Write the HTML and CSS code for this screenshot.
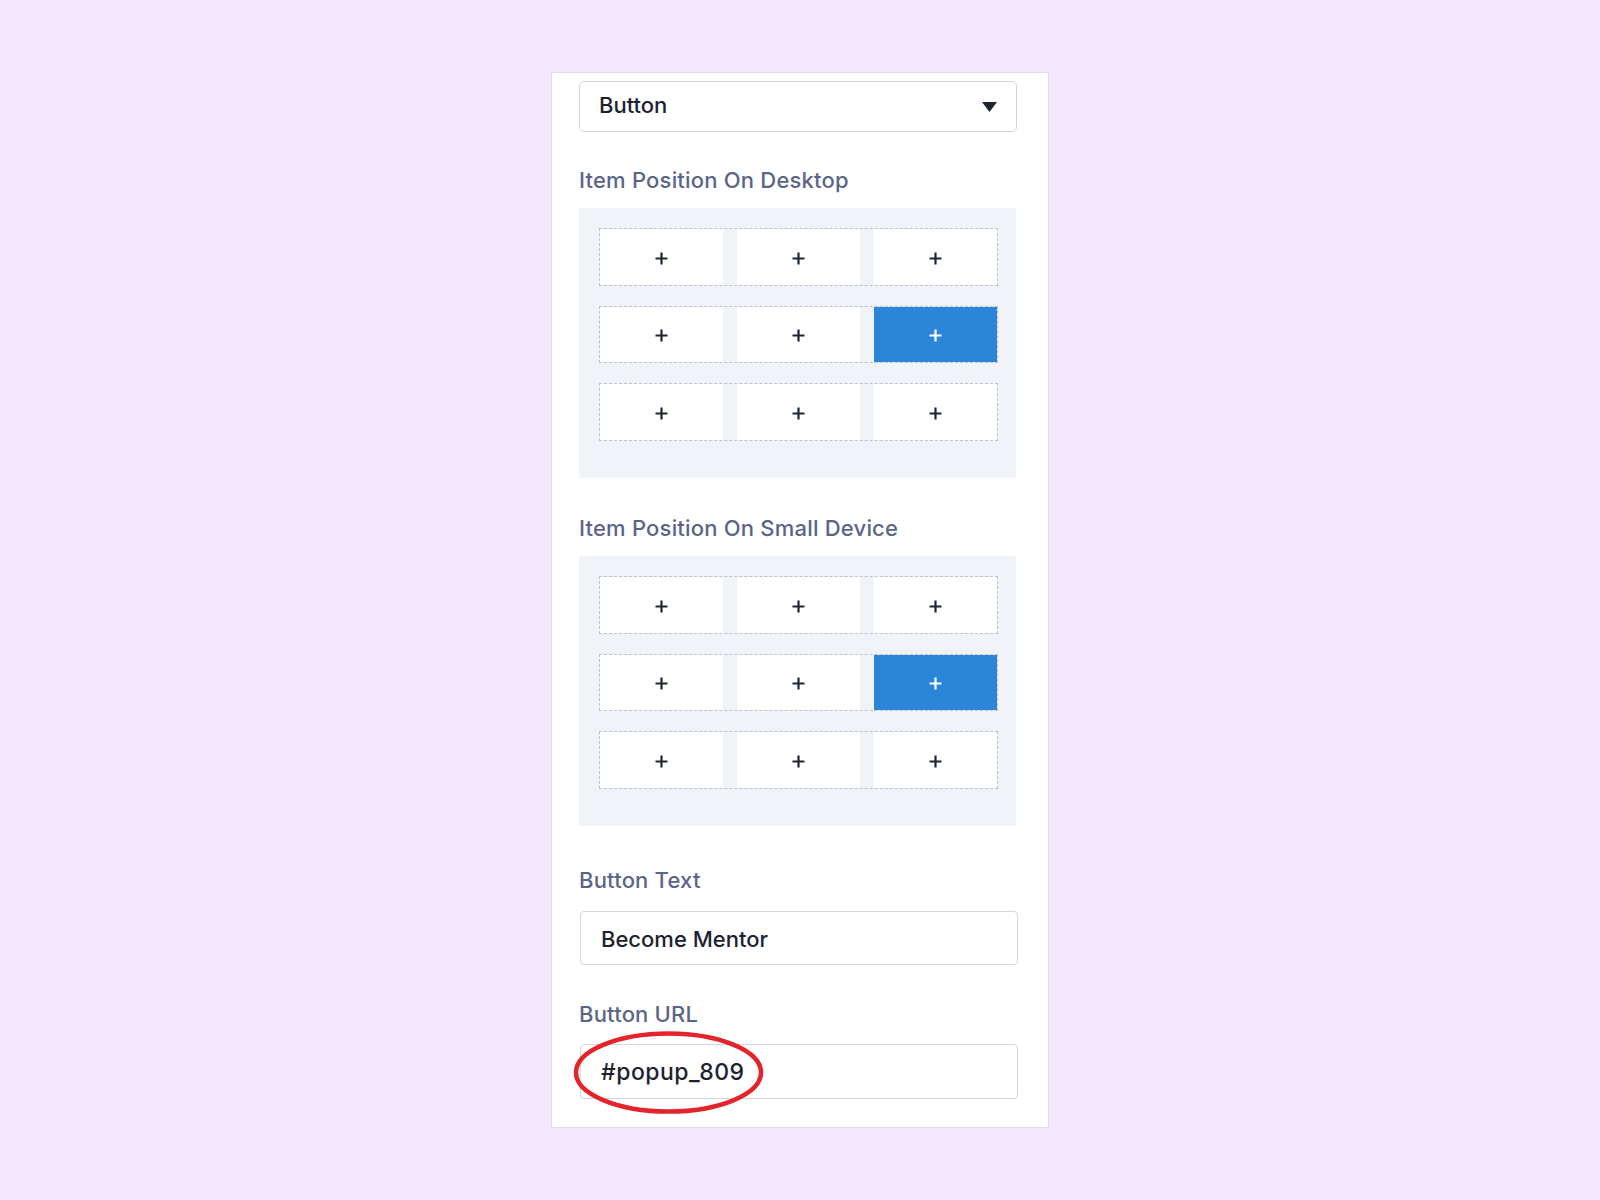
FILE: index.html
```html
<!DOCTYPE html>
<html lang="en">
<head>
<meta charset="utf-8">
<title>Item settings</title>
<link rel="stylesheet" href="styles.css">
</head>
<body>
<div class="stage">
  <div class="panel">
    <div class="select">
      <span class="select-value">Button</span>
      <svg class="caret" width="15" height="10" viewBox="0 0 15 10"><path d="M0 0 H15 L7.5 10 Z" fill="#1f2533"/></svg>
    </div>

    <div class="label label-first">Item Position On Desktop</div>
    <div class="grid-box">
      <div class="row"><div class="cell"><svg class="plus" viewBox="0 0 13 13"><path d="M6.5 0.5V12.5M0.5 6.5H12.5"/></svg></div><div class="cell"><svg class="plus" viewBox="0 0 13 13"><path d="M6.5 0.5V12.5M0.5 6.5H12.5"/></svg></div><div class="cell"><svg class="plus" viewBox="0 0 13 13"><path d="M6.5 0.5V12.5M0.5 6.5H12.5"/></svg></div></div>
      <div class="row"><div class="cell"><svg class="plus" viewBox="0 0 13 13"><path d="M6.5 0.5V12.5M0.5 6.5H12.5"/></svg></div><div class="cell"><svg class="plus" viewBox="0 0 13 13"><path d="M6.5 0.5V12.5M0.5 6.5H12.5"/></svg></div><div class="cell active"><svg class="plus" viewBox="0 0 13 13"><path d="M6.5 0.5V12.5M0.5 6.5H12.5"/></svg></div></div>
      <div class="row"><div class="cell"><svg class="plus" viewBox="0 0 13 13"><path d="M6.5 0.5V12.5M0.5 6.5H12.5"/></svg></div><div class="cell"><svg class="plus" viewBox="0 0 13 13"><path d="M6.5 0.5V12.5M0.5 6.5H12.5"/></svg></div><div class="cell"><svg class="plus" viewBox="0 0 13 13"><path d="M6.5 0.5V12.5M0.5 6.5H12.5"/></svg></div></div>
    </div>

    <div class="label label-second">Item Position On Small Device</div>
    <div class="grid-box">
      <div class="row"><div class="cell"><svg class="plus" viewBox="0 0 13 13"><path d="M6.5 0.5V12.5M0.5 6.5H12.5"/></svg></div><div class="cell"><svg class="plus" viewBox="0 0 13 13"><path d="M6.5 0.5V12.5M0.5 6.5H12.5"/></svg></div><div class="cell"><svg class="plus" viewBox="0 0 13 13"><path d="M6.5 0.5V12.5M0.5 6.5H12.5"/></svg></div></div>
      <div class="row"><div class="cell"><svg class="plus" viewBox="0 0 13 13"><path d="M6.5 0.5V12.5M0.5 6.5H12.5"/></svg></div><div class="cell"><svg class="plus" viewBox="0 0 13 13"><path d="M6.5 0.5V12.5M0.5 6.5H12.5"/></svg></div><div class="cell active"><svg class="plus" viewBox="0 0 13 13"><path d="M6.5 0.5V12.5M0.5 6.5H12.5"/></svg></div></div>
      <div class="row"><div class="cell"><svg class="plus" viewBox="0 0 13 13"><path d="M6.5 0.5V12.5M0.5 6.5H12.5"/></svg></div><div class="cell"><svg class="plus" viewBox="0 0 13 13"><path d="M6.5 0.5V12.5M0.5 6.5H12.5"/></svg></div><div class="cell"><svg class="plus" viewBox="0 0 13 13"><path d="M6.5 0.5V12.5M0.5 6.5H12.5"/></svg></div></div>
    </div>

    <div class="label label-third">Button Text</div>
    <div class="input">Become Mentor</div>

    <div class="label label-fourth">Button URL</div>
    <div class="input input-url">#popup_809
      <svg class="annotation" width="197" height="89" viewBox="0 0 197 89"><ellipse cx="98.5" cy="44.5" rx="92.5" ry="39" fill="none" stroke="#e3242b" stroke-width="4.5"/></svg>
    </div>
  </div>
</div>
</body>
</html>
```

FILE: styles.css
```css
html, body {
  margin: 0;
  padding: 0;
}
body {
  background: #f2e9fe;
  font-family: Inter, "Noto Sans", "Liberation Sans", sans-serif;
  width: 1600px;
  height: 1200px;
}
.stage {
  padding-top: 72px;
  padding-left: 551px;
}
.panel {
  box-sizing: border-box;
  width: 498px;
  height: 1056px;
  background: #ffffff;
  border: 1px solid #dcdbe6;
  padding: 8px 31px 0 27px;
}
.select {
  box-sizing: border-box;
  height: 51px;
  border: 1px solid #d2d5de;
  border-radius: 5px;
  display: flex;
  align-items: center;
  justify-content: space-between;
  padding: 0 19px 3px 19px;
}
.select-value {
  font-size: 22px;
  font-weight: 500;
  color: #1d2230;
}
.caret {
  display: block;
  margin-top: 3px;
}
.label {
  font-size: 22px;
  line-height: 28px;
  font-weight: 500;
  letter-spacing: 0.2px;
  color: #5b6588;
  margin-bottom: 14px;
}
.label-first { margin-top: 34px; margin-bottom: 14px; }
.label-second { margin-top: 36px; margin-bottom: 14px; }
.label-third { margin-top: 40px; margin-bottom: 17px; }
.label-fourth { margin-top: 35px; margin-bottom: 16px; }
.grid-box {
  background: #f0f3f8;
  padding: 20px 18px 37px 20px;
  display: flex;
  flex-direction: column;
  gap: 20px;
  margin-right: 1px;
}
.row {
  box-sizing: border-box;
  height: 58px;
  border: 1px dashed #bfc3c9;
  display: grid;
  grid-template-columns: 1fr 1fr 1fr;
  gap: 14px;
}
.row:nth-child(2) { height: 57px; }
.cell {
  background: #ffffff;
  display: flex;
  align-items: center;
  justify-content: center;
  padding-top: 2px;
}
.cell.active {
  background: #2b86d9;
}
.plus {
  width: 13px;
  height: 13px;
  fill: none;
  stroke: #1f2533;
  stroke-width: 2.2;
}
.cell.active .plus {
  stroke: #ffffff;
}
.input {
  box-sizing: border-box;
  height: 54px;
  border: 1px solid #d3d6de;
  border-radius: 4px;
  margin-left: 1px;
  margin-right: -1px;
  padding: 1px 20px 0 20px;
  display: flex;
  align-items: center;
  font-size: 22px;
  font-weight: 500;
  color: #1d2230;
}
.input-url {
  height: 55px;
  position: relative;
  font-size: 23px;
  letter-spacing: 0.5px;
}
.annotation {
  position: absolute;
  left: -11px;
  top: -17px;
}
```
